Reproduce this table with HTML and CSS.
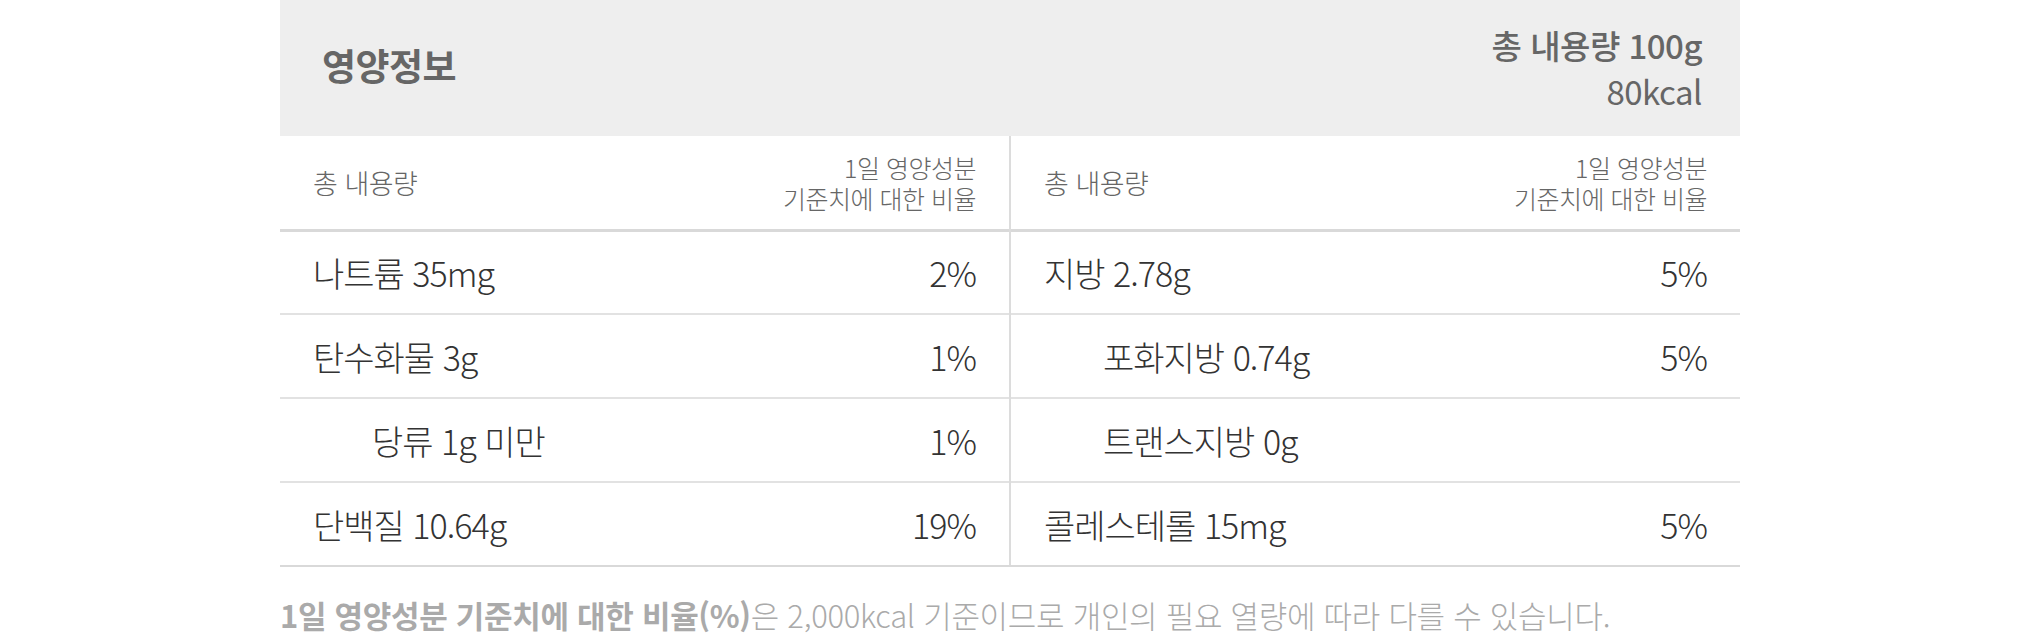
FILE: index.html
```html
<!DOCTYPE html>
<html lang="ko">
<head>
<meta charset="utf-8">
<title>영양정보</title>
<link rel="stylesheet" href="styles.css">
</head>
<body>
<div class="wrap">
  <div class="head">
    <div class="title">영양정보</div>
    <div class="total">
      <div class="total-amount">총 내용량 100g</div>
      <div class="total-kcal">80kcal</div>
    </div>
  </div>
  <div class="grid">
    <div class="col">
      <div class="row colhead">
        <span class="name">총 내용량</span>
        <span class="ratio"><span class="ratio-line">1일 영양성분</span><span class="ratio-line">기준치에 대한 비율</span></span>
      </div>
      <div class="row"><span class="name">나트륨 35mg</span><span class="pct">2%</span></div>
      <div class="row"><span class="name">탄수화물 3g</span><span class="pct">1%</span></div>
      <div class="row"><span class="name sub">당류 1g 미만</span><span class="pct">1%</span></div>
      <div class="row"><span class="name">단백질 10.64g</span><span class="pct">19%</span></div>
    </div>
    <div class="col right">
      <div class="row colhead">
        <span class="name">총 내용량</span>
        <span class="ratio"><span class="ratio-line">1일 영양성분</span><span class="ratio-line">기준치에 대한 비율</span></span>
      </div>
      <div class="row"><span class="name">지방 2.78g</span><span class="pct">5%</span></div>
      <div class="row"><span class="name sub">포화지방 0.74g</span><span class="pct">5%</span></div>
      <div class="row"><span class="name sub">트랜스지방 0g</span><span class="pct"></span></div>
      <div class="row"><span class="name">콜레스테롤 15mg</span><span class="pct">5%</span></div>
    </div>
  </div>
  <p class="note"><strong>1일 영양성분 기준치에 대한 비율(%)</strong>은 2,000kcal 기준이므로 개인의 필요 열량에 따라 다를 수 있습니다.</p>
</div>
</body>
</html>
```
FILE: styles.css
```css
* { box-sizing: border-box; }
html, body { margin: 0; padding: 0; background: #fff; }
body {
  font-family: "Noto Sans CJK KR", "Noto Sans", sans-serif;
  color: #333;
}
.wrap {
  width: 1460px;
  margin-left: 280px;
}
.head {
  height: 136px;
  background: #eeeeee;
  display: flex;
  justify-content: space-between;
  align-items: center;
  padding: 0 38px 0 42px;
}
.title {
  font-size: 37px;
  font-weight: 700;
  color: #666;
  letter-spacing: -0.5px;
  margin-bottom: 6px;
}
.total {
  text-align: right;
  color: #666;
  font-size: 33px;
  line-height: 46px;
  letter-spacing: -0.5px;
}
.total-amount { font-weight: 500; }
.total-kcal { font-weight: 400; }
.grid {
  display: grid;
  grid-template-columns: 729px 1fr;
  border-bottom: 2px solid #d9d9d9;
}
.col.right { border-left: 2px solid #dcdcdc; }
.row {
  display: flex;
  justify-content: space-between;
  align-items: center;
  height: 84px;
  padding: 0 33px;
  border-top: 2px solid #e2e2e2;
  font-size: 34px;
  font-weight: 300;
  color: #333;
  letter-spacing: -1px;
}
.row.colhead {
  height: 93px;
  border-top: none;
  font-size: 27px;
  color: #666;
  letter-spacing: -0.5px;
}
.row.colhead + .row { border-top: 3px solid #d9d9d9; }
.ratio {
  display: flex;
  flex-direction: column;
  align-items: flex-end;
  font-size: 25px;
}
.ratio-line {
  display: block;
  line-height: 31px;
}
.name.sub { padding-left: 59px; }
.note {
  margin: 0;
  padding-top: 25px;
  font-size: 31px;
  font-weight: 300;
  color: #aaa;
  letter-spacing: -0.3px;
}
.note strong { font-weight: 700; }
```
